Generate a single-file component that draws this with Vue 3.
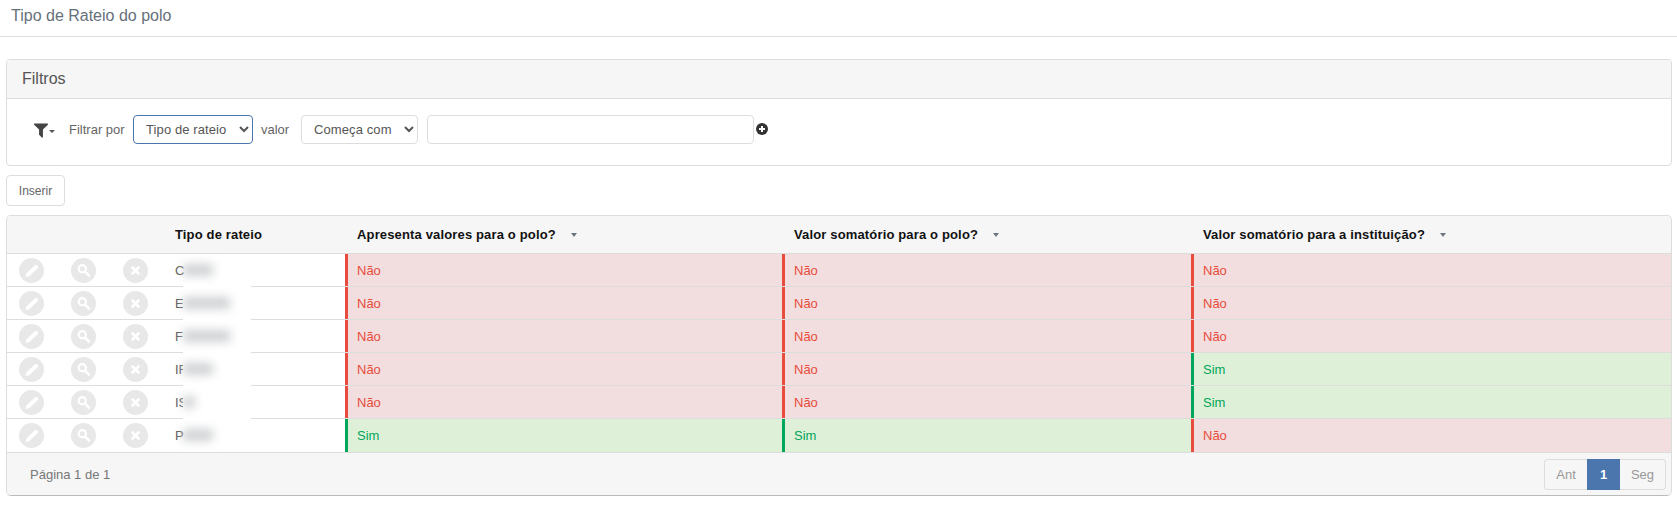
<script setup>
const rows = [
  { initial: 'C', blob: 30, a: false, b: false, c: false },
  { initial: 'E', blob: 47, a: false, b: false, c: false },
  { initial: 'F', blob: 47, a: false, b: false, c: false },
  { initial: 'IF', blob: 30, a: false, b: false, c: true },
  { initial: 'IS', blob: 12, a: false, b: false, c: true },
  { initial: 'P', blob: 30, a: true, b: true, c: false },
]
</script>

<template>
  <div class="page">
    <header class="title">Tipo de Rateio do polo</header>

    <section class="panel">
      <div class="panel-head">Filtros</div>
      <div class="panel-body">
        <span class="funnel">
          <svg width="16" height="18" viewBox="0 0 1408 1792"><path fill="#444" d="M1403 295q18 43-14 70l-493 493v742q0 42-39 59-13 5-25 5-27 0-45-19l-256-256q-19-19-19-45v-486l-493-493q-32-27-14-70 18-41 59-41h1280q41 0 59 41z"/></svg>
          <i class="mini-caret"></i>
        </span>
        <label class="lbl lbl-first">Filtrar por</label>
        <select class="ctl sel-type"><option>Tipo de rateio</option></select>
        <label class="lbl lbl-val">valor</label>
        <select class="ctl sel-op"><option>Começa com</option></select>
        <input class="ctl txt" type="text" />
        <svg class="plus" width="12" height="12" viewBox="0 0 12 12"><circle cx="6" cy="6" r="6" fill="#333"/><path d="M6 3v6M3 6h6" stroke="#fff" stroke-width="2"/></svg>
      </div>
    </section>

    <button class="insert">Inserir</button>

    <section class="card">
      <div class="patch"></div>
      <table>
        <colgroup>
          <col class="c-act" /><col class="c-act" /><col class="c-act" />
          <col class="c-name" /><col class="c-a" /><col class="c-b" /><col class="c-c" />
        </colgroup>
        <thead>
          <tr>
            <th></th><th></th><th></th>
            <th>Tipo de rateio</th>
            <th>Apresenta valores para o polo?<i class="caret"></i></th>
            <th>Valor somatório para o polo?<i class="caret"></i></th>
            <th>Valor somatório para a instituição?<i class="caret"></i></th>
          </tr>
        </thead>
        <tbody>
          <tr v-for="(r, i) in rows" :key="i">
            <td class="act"><span class="circle"><svg width="25" height="25" viewBox="0 0 25 25"><path fill="#fff" d="M6.5 19l.8-3.6 8.6-8.2a1.5 1.5 0 0 1 2.1 0l.8.8a1.5 1.5 0 0 1 0 2.1l-8.6 8.1z"/></svg></span></td>
            <td class="act"><span class="circle"><svg width="25" height="25" viewBox="0 0 25 25"><circle cx="11.3" cy="10.8" r="3.6" fill="none" stroke="#fff" stroke-width="2.2"/><path d="M14 13.6l4 4" stroke="#fff" stroke-width="2.6" stroke-linecap="round"/></svg></span></td>
            <td class="act"><span class="circle"><svg width="25" height="25" viewBox="0 0 25 25"><path d="M9.5 9.5l6 6M15.5 9.5l-6 6" stroke="#fff" stroke-width="2.6" stroke-linecap="round"/></svg></span></td>
            <td class="name">{{ r.initial }}<span class="blob" :style="{ width: r.blob + 'px' }"></span></td>
            <td :class="r.a ? 'yes' : 'no'">{{ r.a ? 'Sim' : 'Não' }}</td>
            <td :class="r.b ? 'yes' : 'no'">{{ r.b ? 'Sim' : 'Não' }}</td>
            <td :class="r.c ? 'yes' : 'no'">{{ r.c ? 'Sim' : 'Não' }}</td>
          </tr>
        </tbody>
      </table>
      <footer class="foot">
        <span class="pageinfo">Página 1 de 1</span>
        <nav class="pager">
          <span class="pg pg-ant">Ant</span>
          <span class="pg pg-cur">1</span>
          <span class="pg pg-seg">Seg</span>
        </nav>
      </footer>
    </section>
  </div>
</template>

<style>
html, body { margin: 0; background: #fff; }
</style>

<style scoped>
.page {
  font-family: "Liberation Sans", Arial, sans-serif;
  font-size: 13px;
  color: #555;
  height: 509px;
  overflow: hidden;
}
.title {
  height: 36px;
  box-sizing: content-box;
  border-bottom: 1px solid #ddd;
  padding-left: 11px;
  font-size: 16px;
  line-height: 31px;
  color: #66707a;
}
.panel {
  margin: 22px 5px 0 6px;
  height: 107px;
  box-sizing: border-box;
  border: 1px solid #ddd;
  border-radius: 4px;
}
.panel-head {
  height: 38px;
  box-sizing: content-box;
  background: #f6f6f6;
  border-bottom: 1px solid #ddd;
  border-radius: 3px 3px 0 0;
  padding-left: 15px;
  font-size: 16px;
  line-height: 38px;
  color: #555;
}
.panel-body {
  display: flex;
  align-items: center;
  height: 29px;
  margin-top: 16px;
  padding-left: 26px;
}
.funnel {
  display: inline-flex;
  align-items: center;
  width: 36px;
  gap: 0;
}
.mini-caret {
  display: block;
  margin-top: 4px;
  border-left: 3.5px solid transparent;
  border-right: 3.5px solid transparent;
  border-top: 3.5px solid #555;
}
.lbl { font-size: 13px; color: #666; }
.lbl-first { width: 64px; }
.lbl-val { width: 48px; padding-left: 8px; box-sizing: border-box; }
.ctl {
  box-sizing: border-box;
  height: 29px;
  border: 1px solid #ddd;
  border-radius: 4px;
  background: #fff;
  font-family: "Liberation Sans", Arial, sans-serif;
  font-size: 13px;
  letter-spacing: 0.1px;
  color: #555;
  outline: none;
}
.sel-type { width: 120px; padding-left: 8px; border-color: #4a76ad; }
.sel-op { width: 117px; padding-left: 8px; }
.txt { width: 327px; margin-left: 9px; }
.plus { margin: -2px 0 0 2px; }
.insert {
  display: block;
  margin: 9px 0 0 6px;
  width: 59px;
  height: 31px;
  box-sizing: border-box;
  border: 1px solid #ddd;
  border-radius: 4px;
  background: #fff;
  font-family: "Liberation Sans", Arial, sans-serif;
  font-size: 12px;
  color: #666;
  padding: 0;
}
.card {
  position: relative;
  margin: 9px 5px 0 6px;
  border: 1px solid #ddd;
  border-bottom-color: #bbb;
  border-radius: 5px;
  overflow: hidden;
}
.patch {
  position: absolute;
  left: 176px;
  top: 68px;
  width: 68px;
  height: 142px;
  background: #fff;
  z-index: 1;
}
table {
  width: 100%;
  table-layout: fixed;
  border-collapse: separate;
  border-spacing: 0;
}
.c-act { width: 52px; }
.c-name { width: 182px; }
.c-a { width: 437px; }
.c-b { width: 409px; }
th {
  height: 37px;
  box-sizing: content-box;
  padding: 0 0 0 12px;
  background: #f6f6f6;
  border-bottom: 1px solid #ddd;
  text-align: left;
  font-size: 13px;
  font-weight: 700;
  letter-spacing: 0.15px;
  color: #111;
}
.caret {
  display: inline-block;
  margin-left: 15px;
  vertical-align: 2px;
  border-left: 3.5px solid transparent;
  border-right: 3.5px solid transparent;
  border-top: 4px solid #6b7680;
}
td {
  height: 32px;
  box-sizing: content-box;
  padding: 0 0 0 12px;
  border-bottom: 1px solid #ddd;
  font-size: 13px;
}
tbody tr:last-child td { height: 33px; border-bottom: 0; }
td.act { padding: 0 0 0 12px; }
.circle {
  display: block;
  width: 25px;
  height: 25px;
  border-radius: 50%;
  background: #e8e8e8;
}
.circle svg { display: block; }
.name { position: relative; color: #5a5a5a; }
.blob {
  position: absolute;
  z-index: 2;
  left: 20px;
  top: 10px;
  height: 12px;
  background: #cfd1d3;
  filter: blur(5px);
}
.no { background: #f2dede; color: #e74c3c; box-shadow: inset 3px 0 0 #e74c3c; }
.yes { background: #dff0d8; color: #00a65a; box-shadow: inset 3px 0 0 #00a65a; }
.foot {
  display: flex;
  justify-content: space-between;
  align-items: center;
  height: 42px;
  box-sizing: content-box;
  border-top: 1px solid #ddd;
  background: #f6f6f6;
  padding: 0 5px 0 23px;
}
.pageinfo { color: #777; }
.pager { display: flex; height: 31px; }
.pg {
  box-sizing: border-box;
  display: flex;
  align-items: center;
  justify-content: center;
  font-size: 13px;
  color: #999;
  border: 1px solid #ddd;
}
.pg-ant { width: 43px; border-right: 0; border-radius: 4px 0 0 4px; }
.pg-cur { width: 33px; background: #4a76ad; border-color: #4a76ad; color: #fff; font-weight: 700; }
.pg-seg { width: 46px; border-left: 0; border-radius: 0 4px 4px 0; }
</style>
